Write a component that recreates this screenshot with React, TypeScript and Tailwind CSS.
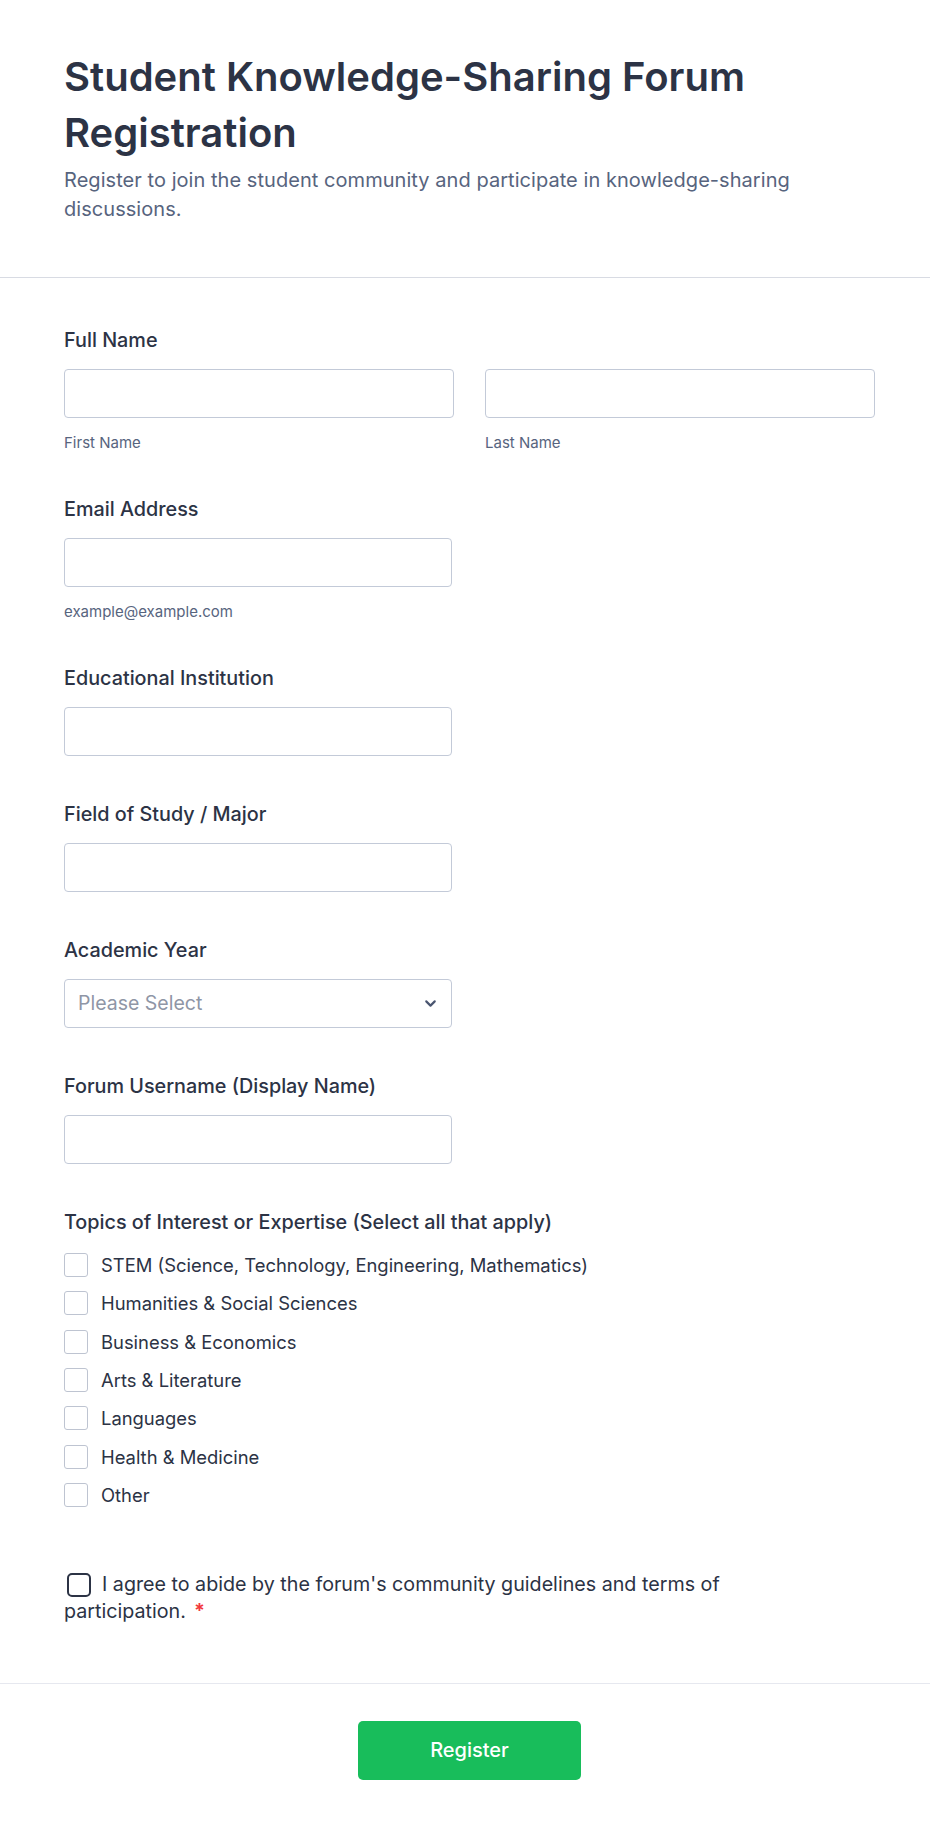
import { ChevronDown } from "lucide-react";

const topics = [
  "STEM (Science, Technology, Engineering, Mathematics)",
  "Humanities & Social Sciences",
  "Business & Economics",
  "Arts & Literature",
  "Languages",
  "Health & Medicine",
  "Other",
];

function Label({ children }: { children: React.ReactNode }) {
  return <label className="block text-[19.8px] leading-[27px] font-medium text-[#2c3345]">{children}</label>;
}

function TextInput({ className = "" }: { className?: string }) {
  return (
    <input
      type="text"
      className={`block h-[49px] rounded-[4px] border border-[#c3cad8] bg-white px-3.5 text-[18px] outline-none ${className}`}
    />
  );
}

function SubLabel({ children }: { children: React.ReactNode }) {
  return <div className="mt-[16px] text-[15px] leading-[18px] text-[#57647e]">{children}</div>;
}

export default function App() {
  return (
    <div className="w-[930px] min-h-screen bg-white font-['Inter',sans-serif] text-[#2c3345]">
      <header className="pl-16 pr-[55px] pt-[49px] pb-[53px] border-b border-[#d8dbe3]">
        <h1 className="text-[40px] leading-[56px] font-semibold text-[#2c3345]">
          Student Knowledge-Sharing Forum Registration
        </h1>
        <p className="mt-[5px] text-[20px] leading-[29px] tracking-[0.05px] text-[#57647e]">
          Register to join the student community and participate in knowledge-sharing discussions.
        </p>
      </header>

      <main className="pl-16 pr-[55px] pt-[49px] pb-[58px]">
        <div className="mb-[44px]">
          <Label>Full Name</Label>
          <div className="mt-[15px] grid grid-cols-2 gap-[31px]">
            <div>
              <TextInput className="w-full" />
              <SubLabel>First Name</SubLabel>
            </div>
            <div>
              <TextInput className="w-full" />
              <SubLabel>Last Name</SubLabel>
            </div>
          </div>
        </div>

        <div className="mb-[44px]">
          <Label>Email Address</Label>
          <TextInput className="mt-[15px] w-[388px]" />
          <SubLabel>example@example.com</SubLabel>
        </div>

        <div className="mb-[45px]">
          <Label>Educational Institution</Label>
          <TextInput className="mt-[15px] w-[388px]" />
        </div>

        <div className="mb-[45px]">
          <Label>Field of Study / Major</Label>
          <TextInput className="mt-[15px] w-[388px]" />
        </div>

        <div className="mb-[45px]">
          <Label>Academic Year</Label>
          <div className="mt-[15px] flex h-[49px] w-[388px] items-center justify-between rounded-[4px] border border-[#c3cad8] pl-[13px] pr-[12px]">
            <span className="text-[19.5px] text-[#8f96a6]">Please Select</span>
            <ChevronDown className="h-[17px] w-[17px] text-[#4a5570]" strokeWidth={3} />
          </div>
        </div>

        <div className="mb-[45px]">
          <Label>Forum Username (Display Name)</Label>
          <TextInput className="mt-[15px] w-[388px]" />
        </div>

        <div>
          <Label>Topics of Interest or Expertise (Select all that apply)</Label>
          <div className="mt-[17px] flex flex-col gap-[14.33px]">
            {topics.map((t) => (
              <div key={t} className="flex h-6 items-center gap-[13px]">
                <span className="h-6 w-6 shrink-0 rounded-[3px] border border-[#bec4d1] bg-white" />
                <span className="text-[18.4px] leading-6 text-[#2c3345]">{t}</span>
              </div>
            ))}
          </div>
        </div>

        <p className="mt-[64px] w-[730px] text-[19.7px] leading-[27px] text-[#2c3345]">
          <span className="ml-[3px] mr-[11px] inline-block h-6 w-6 rounded-[5px] border-2 border-[#2c3345] align-[-6px]" />
          I agree to abide by the forum's community guidelines and terms of participation.
          <span className="ml-2 font-bold text-[#f23a3c]">*</span>
        </p>
      </main>

      <footer className="flex justify-center border-t border-[#e6e8ef] pl-16 pr-[55px] pt-[37px] pb-[50px]">
        <button className="h-[59px] w-[223px] rounded-[5px] bg-[#18bd5b] text-[20px] font-medium text-white">
          Register
        </button>
      </footer>
    </div>
  );
}
